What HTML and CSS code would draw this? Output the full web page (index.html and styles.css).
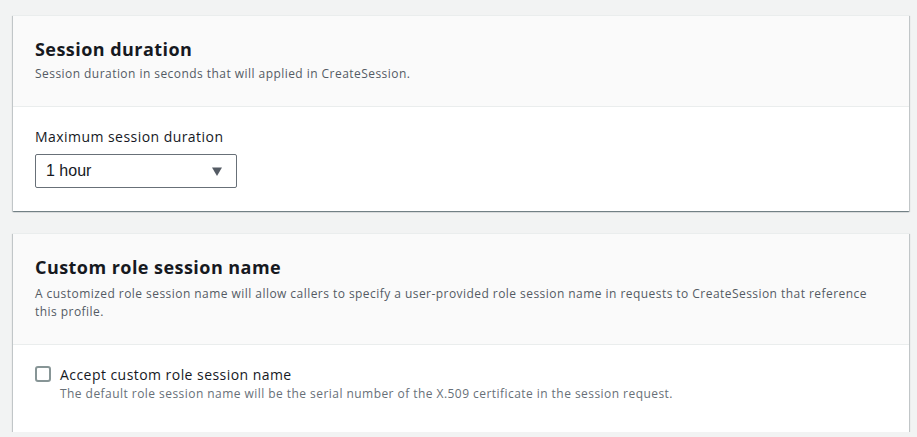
FILE: index.html
```html
<!DOCTYPE html>
<html lang="en">
<head>
<meta charset="utf-8">
<title>Profile settings</title>
<link rel="stylesheet" href="styles.css">
</head>
<body>
<main class="page">
  <section class="card">
    <header class="card-header">
      <h2 class="card-title">Session duration</h2>
      <p class="card-desc">Session duration in seconds that will applied in CreateSession.</p>
    </header>
    <div class="card-body">
      <div class="field">
        <label class="field-label">Maximum session duration</label>
        <div class="select">
          <span class="select-value">1 hour</span>
          <svg class="select-caret" width="10" height="9" viewBox="0 0 10 9" aria-hidden="true"><path d="M0 0.5H10L5 9Z" fill="#545b64"/></svg>
        </div>
      </div>
    </div>
  </section>
  <section class="card">
    <header class="card-header">
      <h2 class="card-title">Custom role session name</h2>
      <p class="card-desc card-desc-long">A customized role session name will allow callers to specify a user-provided role session name in requests to CreateSession that reference this profile.</p>
    </header>
    <div class="card-body card-body-check">
      <div class="check">
        <span class="check-box"></span>
        <div class="check-text">
          <span class="check-label">Accept custom role session name</span>
          <span class="check-desc">The default role session name will be the serial number of the X.509 certificate in the session request.</span>
        </div>
      </div>
    </div>
  </section>
</main>
</body>
</html>
```
FILE: styles.css
```css
* { box-sizing: border-box; }
html, body { margin: 0; padding: 0; }
body {
  background: #f2f3f3;
  font-family: "Open Sans", "Noto Sans", sans-serif;
  letter-spacing: 0.45px;
  color: #16191f;
}
.page {
  display: flex;
  flex-direction: column;
  gap: 22px;
  padding: 15px 8px 0 13px;
}
.card {
  background: #fff;
  border-top: 1px solid #eaeded;
  box-shadow: 0 1px 1px 0 rgba(0, 28, 36, 0.35), 1px 1px 1px 0 rgba(0, 28, 36, 0.15), -1px 1px 1px 0 rgba(0, 28, 36, 0.15);
}
.card-header {
  background: #fafafa;
  border-bottom: 1px solid #eaeded;
  padding: 22px 22px 23px;
}
.card-title {
  margin: 0;
  font-size: 18px;
  line-height: 22px;
  font-weight: 700;
  color: #16191f;
}
.card-desc {
  margin: 5px 0 0;
  font-size: 12px;
  line-height: 18px;
  color: #545b64;
}
.card-desc-long { margin-top: 7px; }
.card-body {
  padding: 19px 22px 23px;
}
.field-label {
  display: block;
  font-size: 14px;
  line-height: 22px;
  color: #16191f;
  margin-bottom: 6px;
}
.select {
  width: 202px;
  height: 34px;
  border: 1px solid #687078;
  border-radius: 2px;
  display: flex;
  align-items: center;
  justify-content: space-between;
  padding: 0 14px 0 10px;
  background: #fff;
}
.select-value {
  font-family: "Liberation Sans", Arial, sans-serif;
  font-size: 16px;
  letter-spacing: 0;
  color: #16191f;
}
.select-caret { display: block; }
.card-body-check { padding: 20px 22px 29px; }
.check {
  display: flex;
  gap: 9px;
  align-items: flex-start;
}
.check-box {
  flex: none;
  width: 16px;
  height: 16px;
  margin-top: 1px;
  border: 2px solid #879596;
  border-radius: 3px;
  background: #fff;
}
.check-text {
  display: flex;
  flex-direction: column;
}
.check-label {
  font-size: 14px;
  line-height: 20px;
  color: #16191f;
}
.check-desc {
  font-size: 12px;
  line-height: 18px;
  color: #687078;
}
```
